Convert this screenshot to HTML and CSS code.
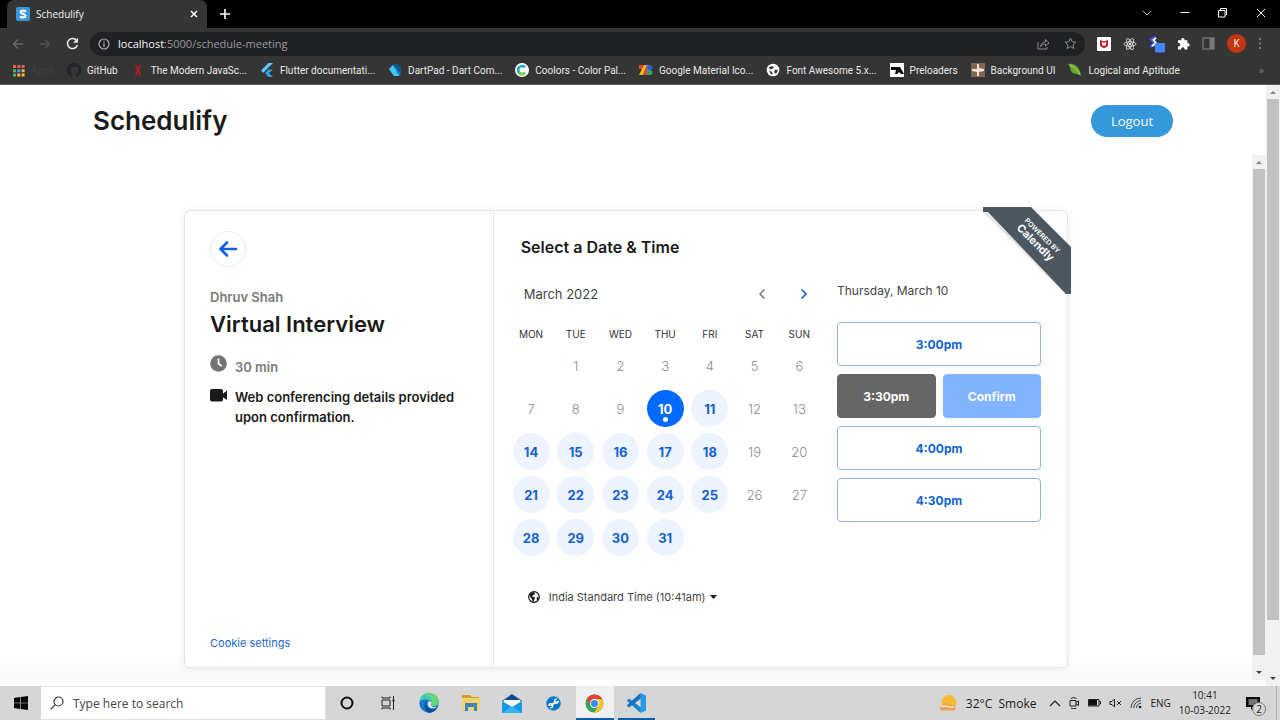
FILE: index.html
```html
<!DOCTYPE html>
<html lang="en">
<head>
<meta charset="utf-8">
<title>Schedulify</title>
<link rel="stylesheet" href="styles.css">
</head>
<body>
<header class="browser">
  <div class="tabstrip">
    <div class="tab">
      <svg class="tab-logo" width="14" height="14" viewBox="0 0 14 14"><rect width="14" height="14" rx="2" fill="#3a96da"/><path d="M10 4.600C9 3.400 4.800 3 4.600 5.100 4.500 7 9.500 6.600 9.400 8.900 9.200 11 5 10.500 4 9.400" fill="none" stroke="#fff" stroke-width="2.200"/></svg>
      <span class="tab-title">Schedulify</span>
      <button class="plain" aria-label="Close tab"><svg width="8" height="8" viewBox="0 0 8 8"><path d="M1 1l6 6M7 1L1 7" stroke="#fff" stroke-width="1.500"/></svg></button>
    </div>
    <button class="plain new-tab" aria-label="New tab"><svg width="10" height="10" viewBox="0 0 10 10"><path d="M5 0v10M0 5h10" stroke="#fff" stroke-width="1.600"/></svg></button>
    <div class="window-controls">
      <button class="plain" aria-label="Tab search"><svg width="10" height="10" viewBox="0 0 10 10"><path d="M1 3l4 4 4-4" fill="none" stroke="#bbb"/></svg></button>
      <button class="plain" aria-label="Minimize"><svg width="10" height="10" viewBox="0 0 10 10"><path d="M.5 4.500h9" stroke="#fff"/></svg></button>
      <button class="plain" aria-label="Restore"><svg width="10" height="10" viewBox="0 0 10 10"><path d="M.5 2.500h6.500V9H.5zM2.500 2.500v-2h6v6.500h-1" fill="none" stroke="#fff"/></svg></button>
      <button class="plain" aria-label="Close"><svg width="10" height="10" viewBox="0 0 10 10"><path d="M1 1l8 8M9 1L1 9" stroke="#fff"/></svg></button>
    </div>
  </div>
  <div class="toolbar">
    <div class="nav-buttons">
      <button class="plain" aria-label="Back"><svg width="12" height="12" viewBox="0 0 12 12"><path d="M11 6H1.500M6 1.500L1.500 6 6 10.500" fill="none" stroke="#696969" stroke-width="1.300"/></svg></button>
      <button class="plain" aria-label="Forward"><svg width="12" height="12" viewBox="0 0 12 12"><path d="M1 6h9.500M6 1.500L10.500 6 6 10.500" fill="none" stroke="#505050" stroke-width="1.300"/></svg></button>
      <button class="plain" aria-label="Reload"><svg width="13" height="13" viewBox="0 0 13 13"><path d="M10.800 4A5 5 0 1 0 11.300 8" fill="none" stroke="#eee" stroke-width="1.500"/><path d="M12 .8v5H7z" fill="#eee"/></svg></button>
    </div>
    <div class="address">
      <svg width="12" height="12" viewBox="0 0 12 12"><circle cx="6" cy="6" r="5" fill="none" stroke="#aaa" stroke-width="1.200"/><path d="M6 5.200V9M6 3v1.300" stroke="#aaa" stroke-width="1.300"/></svg>
      <span class="url"><b>localhost</b>:5000/schedule-meeting</span>
      <svg width="13" height="12" viewBox="0 0 13 12"><path d="M1 4v7h9V9M3.500 8.500C4 5.500 6 4 8.500 4V1.500L12 5 8.500 8V6C6.500 6 5 6.500 3.500 8.500z" fill="none" stroke="#888"/></svg>
      <svg class="star" width="13" height="13" viewBox="0 0 13 13"><path d="M6.500 1.200l1.600 3.500 3.800.4-2.800 2.600.8 3.800-3.400-1.900-3.400 1.900.8-3.800L1.100 5.100l3.800-.4z" fill="none" stroke="#888"/></svg>
    </div>
    <div class="extensions">
      <svg width="14" height="14" viewBox="0 0 14 14"><rect width="14" height="14" rx="1" fill="#fff"/><path d="M3 3l4 1.500L11 3v6l-4 2.500L3 9z" fill="#c4202f"/><path d="M5 5l2 1 2-1v3L7 9 5 8z" fill="#fff"/></svg>
      <svg width="14" height="14" viewBox="0 0 14 14" fill="none" stroke="#ddd" stroke-width=".9"><ellipse cx="7" cy="7" rx="6" ry="2.300"/><ellipse cx="7" cy="7" rx="6" ry="2.300" transform="rotate(60 7 7)"/><ellipse cx="7" cy="7" rx="6" ry="2.300" transform="rotate(120 7 7)"/><circle cx="7" cy="7" r="1" fill="#eee"/></svg>
      <svg width="16" height="18" viewBox="0 0 16 18"><path d="M7 2L2.500 4.500 6 8.500 1.500 12" fill="none" stroke="#3d55f5" stroke-width="3"/><path d="M7 3L4.500 5 7 8l-4 3" fill="none" stroke="#fff" stroke-width="1.800"/><rect x="6" y="8" width="10" height="9.500" rx="1" fill="#4285f4"/></svg>
      <svg width="13" height="13" viewBox="0 0 13 13"><path d="M1 3.200h3.200a1.700 1.700 0 1 1 3.200 0h3v3a1.700 1.700 0 1 1 0 3.200V12.500H7.500a1.700 1.700 0 1 0-3.200 0H1V9.300a1.700 1.700 0 1 0 0-3.200z" fill="#fff"/></svg>
      <svg width="13" height="13" viewBox="0 0 13 13"><rect x="1" y="1" width="11" height="11" fill="none" stroke="#777" stroke-width="1.300"/><path d="M7.500 1H12v11H7.500z" fill="#777"/></svg>
      <span class="avatar">K</span>
      <svg width="4" height="13" viewBox="0 0 4 13" fill="#888"><circle cx="2" cy="2" r="1"/><circle cx="2" cy="6.500" r="1"/><circle cx="2" cy="11" r="1"/></svg>
    </div>
  </div>
  <nav class="bookmarks" aria-label="Bookmarks">
    <a href="#" class="apps"><svg width="13" height="13" viewBox="0 0 13 13"><g fill="#e8604c"><path d="M1 1h3v3H1zM5.300 1h3v3h-3zM9.600 1h3v3h-3z"/></g><path d="M1 5.300h3v3H1z" fill="#4fae67"/><path d="M5.300 5.300h3v3h-3z" fill="#569cf0"/><path d="M9.600 5.300h3v3h-3zM5.300 9.600h3v3h-3zM9.600 9.600h3v3h-3z" fill="#efb93d"/><path d="M1 9.600h3v3H1z" fill="#4fae67"/></svg><span>Apps</span></a>
    <a href="#"><svg width="14" height="14" viewBox="0 0 16 16"><path fill="#202428" d="M8 0C3.580 0 0 3.580 0 8c0 3.540 2.290 6.530 5.470 7.590.4.070.55-.17.55-.38V13.500c-2.010.4-2.530-.6-2.690-1.100-.5-.8-.8-1-1.100-1.200.8-.3 1.700.7 1.900 1 .7 1.200 1.800.9 2.200.7.100-.5.300-.8.500-1C5 11.700 3.200 11 3.200 8c0-.9.300-1.600.8-2.200-.1-.2-.4-1 .1-2.100 0 0 .7-.2 2.200.8a7.500 7.500 0 0 1 4 0c1.500-1 2.200-.8 2.200-.8.400 1.100.1 1.900.1 2.100.5.600.8 1.300.8 2.200 0 3-1.900 3.700-3.600 3.900.3.300.5.700.5 1.500v1.800c0 .2.200.5.600.4A8 8 0 0 0 8 0z"/></svg><span>GitHub</span></a>
    <a href="#"><svg width="14" height="14" viewBox="0 0 14 14"><path d="M4.500 2L7 6l2.500-4M7 6l-2.300 7M7 6l2.300 7" fill="none" stroke="#b01f25" stroke-width="1.700"/><circle cx="7" cy="6" r="1.800" fill="#b01f25"/></svg><span>The Modern JavaSc...</span></a>
    <a href="#"><svg width="14" height="14" viewBox="0 0 14 14"><path d="M8.500 0L1 7.500l2.300 2.300L13 0z" fill="#5ecbf6"/><path d="M8.500 6.500L5 10l3.500 4H13L9 10l4-3.500z" fill="#30a7e0"/></svg><span>Flutter documentati...</span></a>
    <a href="#"><svg width="14" height="14" viewBox="0 0 14 14"><path d="M1 6l4-4 4-1 4 4v6l-2 2H6z" fill="#1785cb"/><path d="M1 6l4-4 6 11H6z" fill="#43c5f5"/><path d="M5 2l4-1 4 4v6z" fill="#075798"/></svg><span>DartPad - Dart Com...</span></a>
    <a href="#"><svg width="14" height="14" viewBox="0 0 14 14"><circle cx="7" cy="7" r="7" fill="#fff"/><path d="M10 4.200A4 4 0 1 0 10 9.800" fill="none" stroke="#14aeb0" stroke-width="2.600"/><path d="M4 10a4 4 0 0 0 6-.2" fill="none" stroke="#8ace43" stroke-width="2.600"/><path d="M7 3a4 4 0 0 1 3 1.200" fill="none" stroke="#399df1" stroke-width="2.600"/></svg><span>Coolors - Color Pal...</span></a>
    <a href="#"><svg width="14" height="14" viewBox="0 0 14 14"><path d="M0 2h4v4H0z" fill="#e94235"/><path d="M0 12L5 2h3L4 12z" fill="#fbbc04"/><path d="M4 12L8 2v10z" fill="#e94235"/><path d="M8 2h3v10H8z" fill="#4285f4"/><circle cx="11" cy="4.500" r="2.500" fill="#2c5fd6"/><circle cx="11" cy="9.500" r="2.500" fill="#34a853"/></svg><span>Google Material Ico...</span></a>
    <a href="#"><svg width="14" height="14" viewBox="0 0 14 14"><circle cx="7" cy="7" r="6.300" fill="#fff"/><path d="M3 4l3-1 2 1.500L6 6 4 6.500zM9 6.500l3 .5-2 4-2-2zM3 8l2.500.5L7 11l-2 .5z" fill="#3b3b3b"/></svg><span>Font Awesome 5.x...</span></a>
    <a href="#"><svg width="14" height="14" viewBox="0 0 14 14"><path d="M0 0h14v14H0z" fill="#fff"/><path d="M1 4h9l4 7h-3L9 9l-2 2H5l1-4H1z" fill="#080808"/></svg><span>Preloaders</span></a>
    <a href="#"><svg width="14" height="14" viewBox="0 0 14 14"><path d="M0 0h14v14H0z" fill="#82664f"/><path d="M6 1h2v4l5 1v2L8 9v4H6V9L1 8V6h5z" fill="#f1e4d6"/></svg><span>Background UI</span></a>
    <a href="#"><svg width="14" height="14" viewBox="0 0 14 14"><path d="M0 1c6-1 12 2 13 12-3-3-8-1-10-5C2 5 2 3 0 1z" fill="#62a62d"/><path d="M2 2c5 2 8 5 10 10" fill="none" stroke="#b7d85e"/></svg><span>Logical and Aptitude</span></a>
    <span class="more">»</span>
  </nav>
</header>

<main class="page">
  <div class="site">
    <header class="site-header">
      <h1 class="brand">Schedulify</h1>
      <button class="logout">Logout</button>
    </header>
    <div class="frame">
      <div class="booking-area">
        <div class="card">
          <section class="details">
            <button class="back" aria-label="Go back"><svg width="20" height="18" viewBox="0 0 20 18"><path d="M18 9H3M9 2.500L2.500 9 9 15.500" fill="none" stroke="#0e62e0" stroke-width="2.600" stroke-linecap="round" stroke-linejoin="round"/></svg></button>
            <p class="host">Dhruv Shah</p>
            <h2 class="event">Virtual Interview</h2>
            <p class="fact duration"><svg width="17" height="17" viewBox="0 0 17 17"><circle cx="8.500" cy="8.500" r="8.300" fill="#737373"/><path d="M8.500 3.500v5.300l3.200 2.200" fill="none" stroke="#fff" stroke-width="1.700"/></svg><span>30 min</span></p>
            <p class="fact location"><svg width="17" height="13" viewBox="0 0 17 13"><rect y="0" width="13" height="12.500" rx="2" fill="#1a1a1a"/><path d="M12.500 5L17 1.500v9.500L12.500 8z" fill="#1a1a1a"/></svg><span>Web conferencing details provided upon confirmation.</span></p>
            <a href="#" class="cookies">Cookie settings</a>
          </section>
          <section class="schedule">
            <h2 class="select-title">Select a Date &amp; Time</h2>
            <div class="pickers">
              <div class="calendar">
                <div class="month">
                  <span class="month-name">March 2022</span>
                  <button class="plain" aria-label="Previous month"><svg width="8" height="12" viewBox="0 0 8 12"><path d="M6.500 1.500L2 6l4.500 4.500" fill="none" stroke="#777" stroke-width="1.500"/></svg></button>
                  <button class="plain" aria-label="Next month"><svg width="8" height="12" viewBox="0 0 8 12"><path d="M1.500 1.500L6 6l-4.500 4.500" fill="none" stroke="#1565c8" stroke-width="1.700"/></svg></button>
                </div>
                <table class="days">
                  <thead><tr><th>MON</th><th>TUE</th><th>WED</th><th>THU</th><th>FRI</th><th>SAT</th><th>SUN</th></tr></thead>
                  <tbody>
                    <tr><td></td><td>1</td><td>2</td><td>3</td><td>4</td><td>5</td><td>6</td></tr>
                    <tr><td>7</td><td>8</td><td>9</td><td><button class="day selected">10</button></td><td><button class="day">11</button></td><td>12</td><td>13</td></tr>
                    <tr><td><button class="day">14</button></td><td><button class="day">15</button></td><td><button class="day">16</button></td><td><button class="day">17</button></td><td><button class="day">18</button></td><td>19</td><td>20</td></tr>
                    <tr><td><button class="day">21</button></td><td><button class="day">22</button></td><td><button class="day">23</button></td><td><button class="day">24</button></td><td><button class="day">25</button></td><td>26</td><td>27</td></tr>
                    <tr><td><button class="day">28</button></td><td><button class="day">29</button></td><td><button class="day">30</button></td><td><button class="day">31</button></td><td></td><td></td><td></td></tr>
                  </tbody>
                </table>
                <button class="timezone"><svg width="12" height="12" viewBox="0 0 12 12"><circle cx="6" cy="6" r="5.300" fill="#fff" stroke="#1a1a1a" stroke-width="1.200"/><path d="M2.500 2L6 1l1 1-.5 1.500L5 4 4 5.500l2.500.5.5 1.500L6 9v2L4.500 10 4 8 1.500 5zM9 6l2 .5L9.500 9.500 8.500 8z" fill="#1a1a1a"/></svg><span>India Standard Time (10:41am)</span><svg width="7" height="4" viewBox="0 0 7 4"><path d="M0 0h7L3.500 4z" fill="#1a1a1a"/></svg></button>
              </div>
              <div class="times">
                <p class="date">Thursday, March 10</p>
                <button class="slot">3:00pm</button>
                <div class="slot-pair"><button class="slot chosen">3:30pm</button><button class="slot confirm">Confirm</button></div>
                <button class="slot">4:00pm</button>
                <button class="slot">4:30pm</button>
              </div>
            </div>
          </section>
          <svg class="ribbon" width="92" height="92" viewBox="0 0 92 92">
            <path d="M0 5l5 0 78 78v5z" fill="#000" opacity=".1"/>
            <path d="M0 0h48l40 40v47h-5L5 5H0z" fill="#4d5760"/>
            <g fill="#fff" text-anchor="middle" transform="rotate(45 54 34)"><text class="powered" x="54" y="29">POWERED BY</text><text class="calendly" x="54" y="40">Calendly</text></g>
          </svg>
        </div>
      </div>
      <div class="scrollbar inner" aria-hidden="true"><i class="arrow up"></i><i class="thumb"></i><i class="arrow down"></i></div>
    </div>
  </div>
  <div class="scrollbar outer" aria-hidden="true"><i class="arrow up"></i><i class="thumb"></i><i class="arrow down"></i></div>
</main>

<footer class="taskbar">
  <button class="plain start" aria-label="Start"><svg width="14" height="14" viewBox="0 0 14 14"><path d="M0 2l6-.9v5.600H0zM6.600 1L14 0v6.700H6.600zM0 7.300h6v5.600L0 12zM6.600 7.300H14V14l-7.400-1z" fill="#050505"/></svg></button>
  <label class="search"><svg width="14" height="14" viewBox="0 0 14 14"><circle cx="8.500" cy="5.500" r="4.500" fill="none" stroke="#333" stroke-width="1.200"/><path d="M5.300 8.700L.8 13.200" stroke="#333" stroke-width="1.200"/></svg><input type="text" placeholder="Type here to search" aria-label="Type here to search"></label>
  <div class="tasks">
    <button aria-label="Cortana"><svg width="14" height="14" viewBox="0 0 14 14"><circle cx="7" cy="7" r="5.500" fill="none" stroke="#111" stroke-width="2"/></svg></button>
    <button aria-label="Task view"><svg width="16" height="14" viewBox="0 0 16 14"><path d="M2 4h8v6H2zM2 .5V2h8V.5M2 13.500V12h8v1.500M13.500 0v14" fill="none" stroke="#222"/><path d="M12.500 3.500h2v2h-2z" fill="#222"/></svg></button>
    <button aria-label="Edge"><svg width="20" height="20" viewBox="0 0 20 20"><circle cx="10" cy="10" r="9.700" fill="#1479cc"/><path d="M.4 9C1 3 5 .3 10 .3c6 0 9.700 4 9.700 8 0 3-2 4.700-4.700 4.700-2 0-3-1-2.500-2 1-2-.5-4-3.500-4C5 6 1.500 7 .4 9z" fill="#3ecbb6"/><path d="M10 .3c6 0 9.700 4 9.700 8 0 3-2 4.700-4.700 4.700-2 0-3-1-2.500-2C13 7 11 3 6 1.300z" fill="#65d975"/><path d="M9 7c-3 3-1 8 3 9 3 .7 5-.5 6.500-2C17 18 13 20 9.500 19.700 5 18 4 9 9 7z" fill="#124b99"/><path d="M9.500 8.500c-1.500 1.500-1 4 .5 5.500 2 2 6 1.500 8 0-2 0-4 0-5.500-1-1-.8-.5-1.500 0-2.500.5-1.800-1.500-3-3-2z" fill="#dceff5"/></svg></button>
    <button aria-label="File Explorer"><svg width="20" height="18" viewBox="0 0 20 18"><path d="M1 1h8l2 2h7v3H1z" fill="#d69b24"/><path d="M1 4h18v12H1z" fill="#f7d36b"/><path d="M4 9h12v8h-3v-4H7v4H4z" fill="#3e83c4"/></svg></button>
    <button aria-label="Mail"><svg width="20" height="19" viewBox="0 0 20 19"><path d="M0 7l10-7 10 7z" fill="#0b4e95"/><path d="M2 6h16v8H2z" fill="#f7fafc"/><path d="M0 7l10 6 10-6v12H0z" fill="#159be5"/><path d="M0 19L10 12.500 20 19z" fill="#33b7f3"/></svg></button>
    <button aria-label="Support tool"><svg width="15" height="15" viewBox="0 0 15 15"><circle cx="7.500" cy="7.500" r="7.200" fill="#0878c8"/><path d="M5 9.500l5-4" stroke="#fff" stroke-width="1.800"/><path d="M11 3.300a2 2 0 1 0 1.300 2.500L10.500 6M4 11.700A2 2 0 1 0 2.800 9L4.500 9.500" fill="none" stroke="#fff" stroke-width="1.300"/></svg></button>
    <button class="active" aria-label="Chrome"><svg width="19" height="19" viewBox="0 0 20 20"><circle cx="10" cy="10" r="9.500" fill="#35a651"/><path d="M1.800 5.200A9.500 9.500 0 0 1 18.200 5.300H10a4.700 4.700 0 0 0-4.200 6.700z" fill="#dd4436"/><path d="M18.200 5.300A9.500 9.500 0 0 1 9.800 19.500l4.500-7.500A4.700 4.700 0 0 0 10 5.300z" fill="#fbc62d"/><circle cx="10" cy="10" r="4.700" fill="#fff"/><circle cx="10" cy="10" r="3.700" fill="#4285f4"/></svg></button>
    <button class="running" aria-label="Visual Studio Code"><svg width="20" height="20" viewBox="0 0 20 20"><path d="M14.500 20L.8 7.800 3 5.600 15.500 15z" fill="#1b86d0"/><path d="M14.500 0L.8 12.200 3 14.400 15.500 5z" fill="#0f72bb"/><path d="M14.500 0L20 2.500v15L14.500 20z" fill="#2a9ae6"/></svg></button>
  </div>
  <div class="tray">
    <svg width="19" height="17" viewBox="0 0 19 17"><circle cx="10" cy="7.500" r="7.500" fill="#f9b934"/><path d="M3 15.500c-3 0-3-4.500 0-4.500 1-4 6-4 7-1 3-1 5 .5 5.500 2 2 .5 1.500 3.500-1 3.500z" fill="#e9a262"/><path d="M2 12c4-3 6 1 13 0" fill="none" stroke="#fae3b5" stroke-width="1.500"/></svg>
    <span class="weather">32°C&nbsp; Smoke</span>
    <svg width="12" height="8" viewBox="0 0 12 8"><path d="M1 7l5-5 5 5" fill="none" stroke="#222" stroke-width="1.200"/></svg>
    <svg width="11" height="12" viewBox="0 0 11 12"><path d="M1 3.500h6v5.500H1zM7 5.500l2.500-1.500v4.500L7 7M2 1.500c1.500-1 4-1 5.500 0M2 11c1.500.8 4 .8 5.500 0" fill="none" stroke="#222"/></svg>
    <svg width="13" height="8" viewBox="0 0 13 8"><path d="M.5.5h10.500v6.500H.5zM11 2.500h1.500v2.500H11" fill="none" stroke="#222"/><path d="M1 1h8v5.500H1z" fill="#111"/></svg>
    <svg width="13" height="10" viewBox="0 0 13 10"><path d="M1 3.500h2L5.500 1v8L3 6.500H1zM8 3l4 4M12 3L8 7" fill="none" stroke="#222"/></svg>
    <svg width="12" height="12" viewBox="0 0 12 12"><path d="M1 11A10 10 0 0 1 11 1M3.700 11A7.300 7.300 0 0 1 11 3.700M6.300 11A4.700 4.700 0 0 1 11 6.300" fill="none" stroke="#444"/><circle cx="10" cy="10" r="1.300" fill="#222"/></svg>
    <span class="lang">ENG</span>
    <span class="clock">10:41<br>10-03-2022</span>
    <span class="notes"><svg width="14" height="13" viewBox="0 0 14 13"><path d="M0 0h14v10H8l-3 3v-3H0z" fill="#0b0b0b"/><path d="M2.500 3h9M2.500 5h9M2.500 7h6" stroke="#ddd"/></svg><span class="count">2</span></span>
  </div>
</footer>
</body>
</html>
```
FILE: styles.css
```css
* { box-sizing: border-box; }
body {
  margin: 0;
  height: 100vh;
  display: flex;
  flex-direction: column;
  overflow: hidden;
  background: #fff;
  font-family: "Open Sans", "Noto Sans", sans-serif;
}
h1, h2, p { margin: 0; }
svg { display: block; flex: none; }
button, input { font-family: inherit; }
a { text-decoration: none; }
button { padding: 0; border: 0; cursor: pointer; }
.plain { display: flex; align-items: center; justify-content: center; background: none; }

/* Browser chrome */
.browser { flex: none; background: #353535; border-bottom: 1px solid #5c5c5c; }
.tabstrip { display: flex; align-items: stretch; height: 28px; background: #000; }
.tab {
  display: flex; align-items: center; gap: 6px;
  width: 200px; margin-left: 7px; padding: 0 9px;
  background: #353535; border-radius: 7px 7px 0 0;
  color: #f2f2f2; font-size: 10px;
}
.tab-title { flex: 1; }
.new-tab { width: 36px; }
.window-controls { display: flex; margin-left: auto; padding-bottom: 3px; }
.window-controls .plain { width: 38px; }
.toolbar { display: flex; align-items: center; height: 31px; }
.nav-buttons { display: flex; gap: 15px; padding: 0 11px 0 12px; }
.address {
  flex: 1; display: flex; align-items: center; height: 24px;
  padding: 0 8px; border-radius: 12px; background: #202124;
}
.url { flex: 1; margin-left: 8px; color: #9a9a9a; font-size: 11px; }
.url b { color: #f4f4f4; font-weight: 400; }
.star { margin-left: 14px; }
.extensions { display: flex; align-items: center; gap: 12px; padding: 0 18px 0 12px; }
.avatar {
  width: 19px; border-radius: 50%; background: #c2370f;
  color: #fff; font-size: 10px; line-height: 19px; text-align: center;
}
.bookmarks {
  display: flex; align-items: center; gap: 13px;
  height: 25px; padding: 0 16px 3px 12px; font-family: Roboto, sans-serif;
}
.bookmarks a { display: flex; align-items: center; gap: 6px; color: #e8e8e8; font-size: 10px; white-space: nowrap; }
.bookmarks .apps { color: #404040; }
.more { margin-left: auto; color: #777; font-size: 11px; }

/* Page */
.page { flex: 1; min-height: 0; display: flex; }
.site { flex: 1; display: flex; flex-direction: column; padding-bottom: 6px; }
.site-header { display: flex; align-items: center; justify-content: space-between; height: 70px; padding: 1px 93px 0; }
.brand { color: #1b1b1b; font: 600 26px/32px Inter, sans-serif; }
.logout { width: 82px; height: 32px; border-radius: 16px; background: #3498db; color: #fff; font-size: 13px; }
.frame { flex: 1; min-height: 0; display: flex; }
.booking-area {
  flex: 1; padding: 55px 184px 12px;
  background: linear-gradient(#fff 95%, #f9f9f9);
}
.scrollbar {
  flex: none; display: flex; flex-direction: column; align-items: center;
  width: 14px; padding: 6px 1px; background: #f1f1f1;
}
.thumb { flex: 1; width: 100%; margin: 5px 0 0; background: #c1c1c1; }
.arrow { border: 3px solid transparent; }
.up { border-top: 0; border-bottom-color: #888; }
.down { border-bottom: 0; border-top-color: #444; }
.inner .thumb { margin-bottom: 16px; }
.outer .thumb { margin-bottom: 57px; }

/* Booking card */
.card {
  position: relative; display: flex; height: 100%;
  border: 1px solid #e6e6e6; border-radius: 6px; background: #fff;
  box-shadow: 0 1px 8px rgba(0, 0, 0, .07);
  color: #1a1a1a; font-family: Inter, sans-serif;
}
.details {
  flex: none; width: 35%; display: flex; flex-direction: column; align-items: flex-start;
  padding: 20px 25px 16px; border-right: 1px solid #e6e6e6;
}
.back {
  display: flex; align-items: center; justify-content: center;
  width: 36px; height: 36px; border: 1px solid #e8edf3; border-radius: 50%; background: #fff;
}
.host { margin-top: 21px; color: #7a7a7a; font-size: 13px; font-weight: 600; line-height: 18px; }
.event { margin-top: 4px; font-size: 22px; font-weight: 600; line-height: 28px; }
.fact { display: flex; gap: 8px; margin-top: 8px; font-size: 13px; font-weight: 600; line-height: 20px; }
.duration { margin-top: 17px; color: #7a7a7a; line-height: 24px; }
.location svg { margin-top: 2px; }
.cookies { margin-top: auto; color: #1968cf; font-size: 11px; line-height: 16px; }
.schedule { flex: 1; min-width: 0; padding: 26px 26px 0 15px; }
.select-title { margin-left: 12px; font-size: 16px; font-weight: 600; line-height: 20px; }
.pickers { display: flex; justify-content: space-between; gap: 14px; }
.calendar { flex: 0 0 313px; padding-top: 27px; }
.month { display: flex; align-items: center; height: 20px; padding: 0 14px 0 15px; }
.month-name { flex: 1; color: #444; font-size: 13px; }
.month .plain + .plain { margin-left: 34px; }
.days { width: 100%; margin-top: 20px; border-collapse: collapse; table-layout: fixed; text-align: center; }
.days th { height: 20px; padding: 0; color: #333; font-size: 10px; font-weight: 400; }
.days td { height: 43px; padding: 0; color: #8a8a8a; font-size: 13px; font-weight: 300; }
.day {
  position: relative; display: block; width: 37px; height: 37px; margin: 0 auto; border-radius: 50%;
  background: #edf4ff; color: #1560cc; font-size: 13px; font-weight: 700;
}
.selected { background: #0069ff; color: #fff; }
.selected::after {
  content: ""; position: absolute; left: 16px; bottom: 5px;
  width: 5px; height: 5px; border-radius: 50%; background: #fff;
}
.timezone { display: flex; align-items: center; margin: 30px 0 0 19px; background: none; color: #444; font-size: 11px; line-height: 16px; }
.timezone span { margin: 0 4px 0 9px; }
.times { flex: 0 1 204px; display: flex; flex-direction: column; gap: 8px; padding-top: 24px; }
.date { margin-bottom: 13px; color: #444; font-size: 12px; line-height: 20px; }
.slot {
  height: 44px; border: 1px solid #93b6df; border-radius: 4px;
  background: #fff; color: #1263cf; font-size: 12px; font-weight: 700;
}
.slot-pair { display: grid; grid-template-columns: 1fr 1fr; gap: 7px; }
.chosen { border-color: #666; background: #666; color: #fff; }
.confirm { border-color: #80b4ff; background: #80b4ff; color: #fff; }
.ribbon { position: absolute; top: -4px; right: -8px; }
.powered { font-size: 7px; font-weight: 600; }
.calendly { font-size: 11px; font-weight: 700; }

/* Taskbar */
.taskbar { flex: none; display: flex; height: 34px; background: #d6d6d6; color: #1c1c1c; }
.start { width: 41px; }
.search { display: flex; align-items: center; gap: 9px; width: 285px; padding: 0 9px; background: #fff; border: 1px solid #e0e0e0; border-left: 0; }
.search input { flex: 1; min-width: 0; padding: 0; border: 0; outline: 0; background: none; font-size: 12px; }
.search input::placeholder { color: #444; }
.tasks { display: flex; width: 331px; }
.tasks button { flex: 1; display: flex; align-items: center; justify-content: center; margin: 0 2px; border-bottom: 2px solid transparent; border-top: 2px solid transparent; background: none; }
.tasks .active { background: #f0f0f0; border-color: #f0f0f0 #f0f0f0 #0b5fa8; }
.tasks .running { border-bottom-color: #0b5fa8; }
.tray { display: flex; align-items: center; gap: 8px; margin-left: auto; padding-right: 3px; font-size: 12px; white-space: nowrap; }
.weather { margin-right: 5px; }
.lang { font-size: 10px; }
.clock { font-size: 10px; line-height: 15px; text-align: center; }
.notes { position: relative; display: flex; align-items: center; width: 31px; height: 34px; margin-left: 7px; border-right: 1px solid #aaa; }
.count {
  position: absolute; left: 6px; top: 16px; width: 14px; height: 14px;
  border: 1px solid #777; border-radius: 50%; background: #d6d6d6;
  font-size: 10px; line-height: 12px; text-align: center;
}
```
